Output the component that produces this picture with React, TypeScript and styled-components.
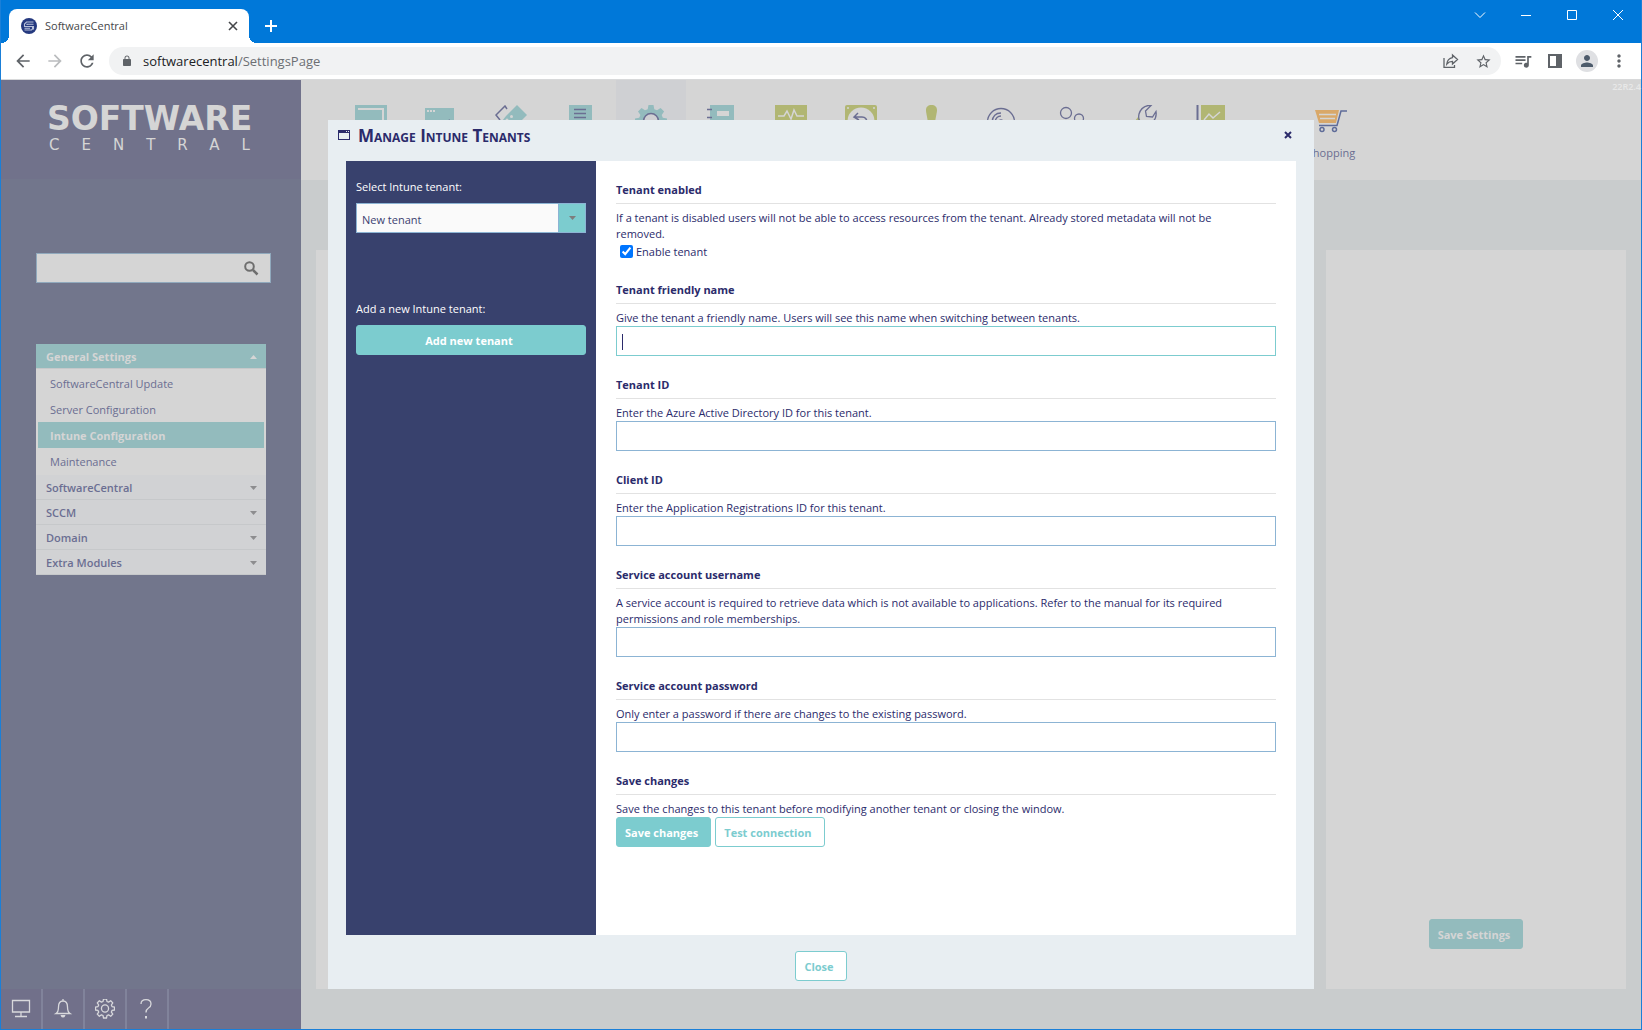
import React, { ReactNode } from "react";
import styled, { createGlobalStyle, css } from "styled-components";

const ink = "#2b2b6b";
const teal = "#7ccccf";
const fieldBlue = "#8cb4d4";
const mutedTeal = "#93bbbd";
const mutedInk = "#6b6e92";
const mutedWhite = "#d5d5d5";
const mutedLime = "#b1b673";
const uiFont = '"Open Sans", "Noto Sans", sans-serif';

const GlobalStyle = createGlobalStyle`
  *, *::before, *::after { box-sizing: border-box; }
  body { margin: 0; font-family: ${uiFont}; font-size: 11px; line-height: 16px; color: ${ink}; }
  button, input, select { font: inherit; color: inherit; }
  button { padding: 0; border: 0; background: none; cursor: pointer; }
  svg { display: block; flex: none; }
  h1, h2, p, ul { margin: 0; padding: 0; }
`;

/* ---------- browser window ---------- */

const Window = styled.div`
  display: flex;
  flex-direction: column;
  min-height: 100vh;
  border: solid #1a7fd8;
  border-width: 0 1px 1px;
`;

const TabStrip = styled.header`
  display: flex;
  align-items: flex-end;
  height: 43px;
  padding-left: 8px;
  background: #0078d9;
`;

const Tab = styled.div`
  position: relative;
  display: flex;
  align-items: center;
  gap: 8px;
  width: 240px;
  height: 34px;
  padding: 0 11px 0 12px;
  border-radius: 8px 8px 0 0;
  background: #fff;
  color: #45474a;

  &::before,
  &::after {
    content: "";
    position: absolute;
    bottom: 0;
    width: 8px;
    height: 8px;
  }
  &::before {
    left: -8px;
    background: radial-gradient(circle at 0 0, transparent 8px, #fff 8px);
  }
  &::after {
    right: -8px;
    background: radial-gradient(circle at 100% 0, transparent 8px, #fff 8px);
  }
`;

const TabTitle = styled.span`
  flex: 1;
`;

const NewTab = styled.button`
  display: grid;
  place-items: center;
  width: 28px;
  height: 34px;
  margin-left: 8px;
`;

const WindowControls = styled.div`
  display: flex;
  align-self: flex-start;
  margin-left: auto;
`;

const WindowControl = styled.button`
  display: grid;
  place-items: center;
  width: 46px;
  height: 30px;
`;

const Toolbar = styled.nav`
  display: flex;
  align-items: center;
  height: 37px;
  padding: 0 6px;
  border-bottom: 1px solid #d8d9da;
  background: #fff;
`;

const ToolButton = styled.button`
  display: grid;
  place-items: center;
  width: 32px;
  height: 28px;
`;

const Address = styled.div`
  display: flex;
  flex: 1;
  align-items: center;
  gap: 10px;
  height: 28px;
  margin: 0 6px;
  padding: 0 2px 0 12px;
  border-radius: 14px;
  background: #f1f2f3;
`;

const Url = styled.span`
  flex: 1;
  font-size: 13px;
  color: #6c6f73;
`;

const Host = styled.span`
  color: #202124;
`;

const AddressActions = styled.div`
  display: flex;
`;

const Avatar = styled.span`
  display: grid;
  place-items: center;
  width: 22px;
  height: 22px;
  border-radius: 50%;
  background: #dfe0e3;
`;

/* ---------- page behind the dialog ---------- */

const Page = styled.div`
  display: grid;
  flex: 1;
`;

const Backdrop = styled.div`
  display: flex;
  grid-area: 1 / 1;
  background: #c9cccd;
`;

const Sidebar = styled.aside`
  display: flex;
  flex-direction: column;
  flex: none;
  width: 300px;
  background: #72768c;
`;

const Brand = styled.div`
  display: flex;
  flex-direction: column;
  height: 99px;
  padding: 23px 0 0 46px;
  background: #71728b;
  color: ${mutedWhite};
  font-family: "DejaVu Sans", sans-serif;
  white-space: nowrap;
`;

const BrandName = styled.span`
  font-size: 33px;
  font-weight: 700;
  line-height: 32px;
`;

const BrandSub = styled.span`
  padding-left: 2px;
  font-size: 15px;
  line-height: 20px;
  letter-spacing: 22px;
`;

const SearchBox = styled.label`
  display: flex;
  align-items: center;
  width: 235px;
  height: 30px;
  margin: 74px 0 61px 35px;
  padding: 0 10px 0 8px;
  border: 1px solid #90a9bd;
  background: ${mutedWhite};
`;

const SearchInput = styled.input`
  flex: 1;
  min-width: 0;
  border: 0;
  outline: 0;
  background: transparent;
`;

const Menu = styled.nav`
  width: 230px;
  margin-left: 35px;
  background: ${mutedWhite};
`;

const MenuGroup = styled.button<{ $open?: boolean }>`
  display: flex;
  align-items: center;
  justify-content: space-between;
  width: 100%;
  height: 25px;
  padding: 1px 9px 0 10px;
  border-bottom: 1px solid #c6c8ca;
  background: ${(p) => (p.$open ? mutedTeal : "#d1d2d4")};
  color: ${(p) => (p.$open ? mutedWhite : mutedInk)};
  font-weight: ${(p) => (p.$open ? 700 : 600)};
`;

const MenuItems = styled.ul`
  padding: 1px 2px;
  list-style: none;
`;

const MenuLink = styled.a<{ $current?: boolean }>`
  display: block;
  height: 26px;
  padding-left: 12px;
  line-height: 27px;
  color: ${mutedInk};
  text-decoration: none;
  ${(p) =>
    p.$current &&
    css`
      background: ${mutedTeal};
      color: ${mutedWhite};
      font-weight: 700;
    `}
`;

const Dock = styled.div`
  display: flex;
  height: 40px;
  margin-top: auto;
  background: #71708a;
`;

const DockButton = styled.button`
  display: grid;
  place-items: center;
  width: 42px;
  border-right: 2px solid #81839b;
`;

const Main = styled.main`
  display: flex;
  flex: 1;
  flex-direction: column;
  min-width: 0;
`;

const Ribbon = styled.div`
  display: flex;
  height: 100px;
  padding-left: 35px;
  background: ${mutedWhite};
`;

const RibbonButton = styled.button<{ $selected?: boolean; $apart?: boolean }>`
  display: flex;
  flex-direction: column;
  flex: none;
  align-items: center;
  gap: 8px;
  width: 70px;
  margin-left: ${(p) => (p.$apart ? "50px" : "0")};
  padding-top: 25px;
  background: ${(p) => (p.$selected ? "#cfd0d3" : "transparent")};
  color: ${mutedInk};
`;

const Version = styled.span`
  margin-left: auto;
  color: #e8e8e8;
  font-size: 9px;
  font-weight: 600;
  line-height: 14px;
  white-space: nowrap;
`;

const Panels = styled.div`
  display: flex;
  flex: 1;
  gap: 15px;
  padding: 70px 15px 40px;
`;

const Panel = styled.section<{ $side?: boolean }>`
  display: flex;
  flex: ${(p) => (p.$side ? "none" : "1")};
  align-items: flex-end;
  justify-content: center;
  width: ${(p) => (p.$side ? "300px" : "auto")};
  padding-bottom: 40px;
  background: ${mutedWhite};
`;

/* ---------- shared controls ---------- */

const Button = styled.button<{ $kind?: "solid" | "outline" | "muted"; $wide?: boolean }>`
  height: 30px;
  width: ${(p) => (p.$wide ? "100%" : "auto")};
  padding: 1px 12px 0 8px;
  border: 1px solid ${teal};
  border-radius: 3px;
  background: ${teal};
  color: #fff;
  font-weight: 700;
  ${(p) =>
    p.$kind === "outline" &&
    css`
      background: #fff;
      color: ${teal};
    `}
  ${(p) =>
    p.$kind === "muted" &&
    css`
      border-color: ${mutedTeal};
      background: ${mutedTeal};
      color: ${mutedWhite};
    `}
`;

/* ---------- dialog ---------- */

const Dialog = styled.section`
  z-index: 1;
  display: flex;
  flex-direction: column;
  grid-area: 1 / 1;
  justify-self: center;
  width: calc(60% + 2px);
  margin: 40px 0;
  padding: 0 18px;
  background: #e8eef2;
`;

const DialogHeader = styled.header`
  display: flex;
  height: 41px;
  margin: 0 -8px;
  padding-top: 7px;
`;

const DialogIcon = styled.span`
  padding-top: 3px;
`;

const DialogTitle = styled.h1`
  flex: 1;
  padding-left: 8px;
  font-size: 17px;
  font-weight: 700;
  font-variant: small-caps;
  line-height: 18px;
`;

const DialogClose = styled.button`
  align-self: flex-start;
  padding: 4px 12px 4px 4px;
`;

const DialogBody = styled.div`
  display: flex;
  flex: 1;
  background: #fff;
`;

const DialogFooter = styled.footer`
  display: flex;
  justify-content: center;
  height: 54px;
  padding-top: 16px;
`;

const TenantPane = styled.div`
  flex: none;
  width: 250px;
  padding: 18px 10px;
  background: #38416d;
  color: #fff;
`;

const PaneLabel = styled.label`
  display: block;
  padding-bottom: 8px;
`;

const PaneText = styled.p`
  padding: 68px 0 8px;
`;

const SelectFrame = styled.div`
  position: relative;
`;

const TenantSelect = styled.select`
  display: block;
  width: 100%;
  height: 30px;
  padding: 3px 34px 0 5px;
  border: 1px solid ${fieldBlue};
  border-radius: 0;
  appearance: none;
  background: #fafafa;
  color: #3c3f70;
`;

const SelectArrow = styled.span`
  position: absolute;
  top: 1px;
  right: 1px;
  bottom: 1px;
  display: grid;
  place-items: center;
  width: 27px;
  border-left: 1px solid ${fieldBlue};
  background: ${teal};
  pointer-events: none;
`;

const SettingsForm = styled.form`
  flex: 1;
  padding: 0 20px 20px;
`;

const Field = styled.div`
  padding-top: 20px;
`;

const FieldTitle = styled.h2`
  height: 23px;
  margin-bottom: 6px;
  border-bottom: 1px solid #e2e2e2;
  font-size: 11px;
  font-weight: 700;
  line-height: 18px;
`;

const Help = styled.p`
  padding-right: 20px;
`;

const InputFrame = styled.div`
  position: relative;
`;

const TextInput = styled.input<{ $active?: boolean }>`
  display: block;
  width: 100%;
  height: 30px;
  padding: 0 6px;
  border: 1px solid ${(p) => (p.$active ? teal : fieldBlue)};
  outline: 0;
  background: #fff;
`;

const Caret = styled.span`
  position: absolute;
  top: 8px;
  left: 6px;
  width: 1px;
  height: 16px;
  background: ${ink};
`;

const CheckLabel = styled.label`
  display: flex;
  align-items: center;
  height: 19px;
`;

const Check = styled.input`
  width: 13px;
  height: 13px;
  margin: 3px 3px 3px 4px;
`;

const ButtonRow = styled.div`
  display: flex;
  gap: 4px;
`;

/* ---------- drawings ---------- */

type GlyphProps = { d: string; size?: number; fill?: string };

const Glyph = ({ d, size = 20, fill = "#5f6368" }: GlyphProps) => (
  <svg width={size} height={size} viewBox="0 0 24 24" fill={fill} aria-hidden="true">
    <path d={d} />
  </svg>
);

const Line = ({ d, size = 12, color = "#fff", width = 1 }: { d: string; size?: number; color?: string; width?: number }) => (
  <svg width={size} height={size} viewBox={`0 0 ${size} ${size}`} fill="none" stroke={color} strokeWidth={width} aria-hidden="true">
    <path d={d} />
  </svg>
);

const Triangle = ({ up, color }: { up?: boolean; color: string }) => (
  <svg width="7" height="4" viewBox="0 0 7 4" fill={color} aria-hidden="true">
    <path d={up ? "M0 4 3.500 0 7 4z" : "M0 0h7L3.500 4z"} />
  </svg>
);

const glyphs = {
  back: "M20 11H7.830l5.590-5.590L12 4l-8 8 8 8 1.410-1.410L7.830 13H20v-2z",
  forward: "M12 4l-1.410 1.410L16.170 11H4v2h12.170l-5.580 5.590L12 20l8-8z",
  reload:
    "M17.650 6.350C16.200 4.900 14.210 4 12 4c-4.420 0-7.990 3.580-7.990 8s3.570 8 7.990 8c3.730 0 6.840-2.550 7.730-6h-2.080c-.82 2.330-3.040 4-5.650 4-3.310 0-6-2.690-6-6s2.690-6 6-6c1.660 0 3.140.69 4.220 1.780L13 11h7V4l-2.350 2.350z",
  lock: "M18 8h-1V6c0-2.760-2.240-5-5-5S7 3.240 7 6v2H6c-1.100 0-2 .9-2 2v10c0 1.100.9 2 2 2h12c1.100 0 2-.9 2-2V10c0-1.100-.9-2-2-2zM8.900 8V6c0-1.710 1.390-3.100 3.100-3.100s3.100 1.390 3.100 3.100v2z",
  star: "M22 9.240l-7.190-.62L12 2 9.190 8.630 2 9.240l5.460 4.730L5.820 21 12 17.270 18.180 21l-1.630-7.030L22 9.240zM12 15.400l-3.760 2.270 1-4.280-3.320-2.880 4.380-.38L12 6.100l1.710 4.040 4.380.38-3.320 2.880 1 4.280L12 15.400z",
  queue:
    "M15 6H3v2h12V6zm0 4H3v2h12v-2zM3 16h8v-2H3v2zM17 6v8.180c-.31-.11-.65-.18-1-.18-1.660 0-3 1.340-3 3s1.340 3 3 3 3-1.340 3-3V8h3V6h-5z",
  person:
    "M12 12c2.210 0 4-1.790 4-4s-1.790-4-4-4-4 1.790-4 4 1.790 4 4 4zm0 2c-2.670 0-8 1.340-8 4v2h16v-2c0-2.660-5.330-4-8-4z",
  dots: "M12 8c1.100 0 2-.9 2-2s-.9-2-2-2-2 .9-2 2 .9 2 2 2zm0 2c-1.100 0-2 .9-2 2s.9 2 2 2 2-.9 2-2-.9-2-2-2zm0 6c-1.100 0-2 .9-2 2s.9 2 2 2 2-.9 2-2-.9-2-2-2z",
};

const SearchArt = () => (
  <svg width="18" height="18" viewBox="0 0 18 18" fill="none" stroke="#6e6e6e" strokeWidth="2" aria-hidden="true">
    <circle cx="7.500" cy="7.500" r="4.300" />
    <path d="m11 11 4.500 4.500" strokeWidth="2.500" />
  </svg>
);

const Favicon = () => (
  <svg width="16" height="16" viewBox="0 0 16 16" aria-hidden="true">
    <circle cx="8" cy="8" r="8" fill="#25397f" />
    <path d="M12.500 4H5.500L3.500 6v2.500h8v2.500l-1 1H3.500M12.500 6.200H6v.8M9 10.300H3.500M12.500 8v3.500" fill="none" stroke="#b9c1da" strokeWidth="1.100" />
  </svg>
);

const gearPath =
  "M13.500 0h5l.8 4.200 2.700 1.100L25.600 3l3.500 3.500-2.400 3.600 1.100 2.600 4.200.8v5l-4.200.8-1.100 2.700 2.400 3.500-3.500 3.500-3.600-2.400-2.700 1.200-.8 4.200h-5l-.8-4.200-2.700-1.200-3.500 2.400L3 25.500 5.400 22l-1.200-2.700L0 18.500v-5l4.200-.8 1.200-2.600L3 6.500 6.500 3 10 5.300l2.700-1.100z";

const ribbonDrawings: { label: string; art: ReactNode }[] = [
  {
    label: "Windows",
    art: (
      <>
        <path d="M0 0h32v32H0z" fill={mutedTeal} />
        <path d="M3 4h25v28" fill="none" stroke={mutedWhite} strokeWidth="2" />
      </>
    ),
  },
  {
    label: "Console",
    art: (
      <>
        <path d="M0 3h29v26H0z" fill={mutedTeal} />
        <path d="M2 6h2m1 0h2m1 0h2" stroke={mutedWhite} strokeWidth="2" />
        <path d="m21 18 4-3" stroke={mutedInk} strokeWidth="2" />
      </>
    ),
  },
  {
    label: "Packages",
    art: (
      <>
        <path d="M11 11 22 0l10 10-18 18-10-8z" fill={mutedTeal} />
        <circle cx="16.500" cy="11.500" r="1.500" fill={mutedWhite} />
        <circle cx="12" cy="15" r="1.500" fill={mutedWhite} />
        <path d="m12 4-2-3-9 9 4 5" fill="none" stroke={mutedInk} strokeWidth="1.500" />
      </>
    ),
  },
  {
    label: "Documents",
    art: (
      <>
        <path d="M4 0h23v32H4z" fill={mutedTeal} />
        <path d="M9 4.500h12M9 8.500h12M9 12.500h12" stroke={mutedInk} strokeWidth="1.500" />
      </>
    ),
  },
  {
    label: "Settings",
    art: (
      <>
        <path d={gearPath} fill={mutedTeal} />
        <circle cx="16" cy="16" r="7.500" fill="#cfd0d3" stroke={mutedInk} strokeWidth="1.500" />
      </>
    ),
  },
  {
    label: "Inventory",
    art: (
      <>
        <path d="M5 0h24v32H5z" fill={mutedTeal} />
        <path d="M12 6h12v5H12z" fill={mutedWhite} />
        <path d="M2 4.500h5M2 12.500h5" stroke={mutedInk} strokeWidth="1.500" />
      </>
    ),
  },
  {
    label: "Monitoring",
    art: (
      <>
        <path d="M0 0h32v32H0z" fill={mutedLime} />
        <path d="M3 11h6l3-5 4 8 3-9 3 6h7" fill="none" stroke={mutedWhite} strokeWidth="1.500" />
      </>
    ),
  },
  {
    label: "Restore",
    art: (
      <>
        <rect width="32" height="32" rx="2" fill={mutedLime} />
        <circle cx="16" cy="16" r="13.500" fill={mutedWhite} />
        <circle cx="3" cy="3" r="1" fill={mutedWhite} />
        <circle cx="29" cy="3" r="1" fill={mutedWhite} />
        <path d="m13 8-4 4 5 3M9 12h8q5 0 5 6" fill="none" stroke={mutedInk} strokeWidth="1.500" />
      </>
    ),
  },
  {
    label: "Alerts",
    art: <path d="M16.500 0C20 0 22 2 22 5c0 3-1 5-2 13h-7C12 10 11 8 11 5c0-3 2-5 5.500-5z" fill={mutedLime} />,
  },
  {
    label: "Media",
    art: (
      <g fill="none" stroke={mutedInk} strokeWidth="1.300">
        <circle cx="16" cy="17" r="13.500" />
        <path d="M7 17q1-9 9-9M10 17q1-6 6-6" />
        <circle cx="16" cy="17" r="2" />
      </g>
    ),
  },
  {
    label: "Users",
    art: (
      <g fill="none" stroke={mutedInk} strokeWidth="1.300">
        <circle cx="11" cy="8" r="5.500" />
        <circle cx="24" cy="13.500" r="4.500" />
      </g>
    ),
  },
  {
    label: "Tools",
    art: (
      <>
        <path d="m10 16 3-4 3 4-3 4z" fill={mutedLime} />
        <path
          d="M15 17q-2-3-1-8 2-7 9-8.500h3L20.500 6l1 5.500 6 .5L31 6.500q1 6-3 10.500"
          fill="none"
          stroke={mutedInk}
          strokeWidth="1.300"
        />
      </>
    ),
  },
  {
    label: "Reports",
    art: (
      <>
        <path d="M6 0h24v28H6z" fill={mutedLime} />
        <path d="M2.500 0v32" stroke={mutedInk} strokeWidth="2" />
        <path d="m9 15 5-6 4 4 7-6" fill="none" stroke={mutedWhite} strokeWidth="1.500" />
      </>
    ),
  },
];

const CartArt = () => (
  <>
    <path d="M0 5h24l-3 13H4z" fill="#d9a869" />
    <path d="M4 9.500h17M5 13.500h15" stroke={mutedWhite} strokeWidth="1.500" />
    <path d="M32 6h-6l-4 14.500H4" fill="none" stroke="#5f6c99" strokeWidth="1.500" />
    <circle cx="7" cy="24.500" r="2" fill="none" stroke="#5f6c99" strokeWidth="1.500" />
    <circle cx="19.500" cy="24.500" r="2" fill="none" stroke="#5f6c99" strokeWidth="1.500" />
  </>
);

const DockArt = ({ children }: { children: ReactNode }) => (
  <svg width="20" height="20" viewBox="0 0 20 20" fill="none" stroke="#d8d8dc" strokeWidth="1.300" aria-hidden="true">
    {children}
  </svg>
);

/* ---------- composition ---------- */

const BrowserChrome = () => (
  <>
    <TabStrip>
      <Tab>
        <Favicon />
        <TabTitle>SoftwareCentral</TabTitle>
        <button type="button" aria-label="Close tab">
          <Line d="M1 1l8 8M9 1l-8 8" size={10} color="#45474a" width={1.6} />
        </button>
      </Tab>
      <NewTab type="button" aria-label="New tab">
        <Line d="M6 0v12M0 6h12" width={2} />
      </NewTab>
      <WindowControls>
        <WindowControl type="button" aria-label="Search tabs">
          <Line d="M1 3.500l5 5 5-5" />
        </WindowControl>
        <WindowControl type="button" aria-label="Minimize">
          <Line d="M1 6.500h10" />
        </WindowControl>
        <WindowControl type="button" aria-label="Maximize">
          <Line d="M1.500 1.500h9v9h-9z" />
        </WindowControl>
        <WindowControl type="button" aria-label="Close window">
          <Line d="M1 1l10 10M11 1L1 11" />
        </WindowControl>
      </WindowControls>
    </TabStrip>
    <Toolbar>
      <ToolButton type="button" aria-label="Back"><Glyph d={glyphs.back} /></ToolButton>
      <ToolButton type="button" aria-label="Forward"><Glyph d={glyphs.forward} fill="#babcbe" /></ToolButton>
      <ToolButton type="button" aria-label="Reload"><Glyph d={glyphs.reload} /></ToolButton>
      <Address>
        <Glyph d={glyphs.lock} size={12} />
        <Url><Host>softwarecentral</Host>/SettingsPage</Url>
        <AddressActions>
          <ToolButton type="button" aria-label="Share">
            <svg width="16" height="16" viewBox="0 0 16 16" fill="none" stroke="#5f6368" strokeWidth="1.300" aria-hidden="true">
              <path d="M1 5v9.300h10.500V12M9.500 2l5 4.500-5 4.500V8.300Q6 8.300 3.800 11 4.500 5.500 9.500 4.700z" />
            </svg>
          </ToolButton>
          <ToolButton type="button" aria-label="Bookmark"><Glyph d={glyphs.star} size={17} /></ToolButton>
        </AddressActions>
      </Address>
      <ToolButton type="button" aria-label="Media controls"><Glyph d={glyphs.queue} /></ToolButton>
      <ToolButton type="button" aria-label="Side panel">
        <svg width="14" height="14" viewBox="0 0 14 14" aria-hidden="true">
          <path d="M0 0h14v14H0z M2 2v10h6V2z" fill="#5f6368" fillRule="evenodd" />
        </svg>
      </ToolButton>
      <ToolButton type="button" aria-label="Profile">
        <Avatar><Glyph d={glyphs.person} size={18} fill="#4d5b6b" /></Avatar>
      </ToolButton>
      <ToolButton type="button" aria-label="Menu"><Glyph d={glyphs.dots} /></ToolButton>
    </Toolbar>
  </>
);

const generalItems = ["SoftwareCentral Update", "Server Configuration", "Intune Configuration", "Maintenance"];
const closedGroups = ["SoftwareCentral", "SCCM", "Domain", "Extra Modules"];

const SidebarContent = () => (
  <Sidebar>
    <Brand>
      <BrandName>SOFTWARE</BrandName>
      <BrandSub>CENTRAL</BrandSub>
    </Brand>
    <SearchBox>
      <SearchInput type="text" aria-label="Search settings" />
      <SearchArt />
    </SearchBox>
    <Menu>
      <MenuGroup type="button" $open>
        General Settings
        <Triangle up color={mutedWhite} />
      </MenuGroup>
      <MenuItems>
        {generalItems.map((item) => (
          <li key={item}>
            <MenuLink href="#" $current={item === "Intune Configuration"}>{item}</MenuLink>
          </li>
        ))}
      </MenuItems>
      {closedGroups.map((group) => (
        <MenuGroup type="button" key={group}>
          {group}
          <Triangle color="#8d8d8f" />
        </MenuGroup>
      ))}
    </Menu>
    <Dock>
      <DockButton type="button" aria-label="Desktop">
        <DockArt><path d="M1.500 1.500h17V13h-17zM10 13v4.500M4 17.500h12" /></DockArt>
      </DockButton>
      <DockButton type="button" aria-label="Notifications">
        <DockArt>
          <path d="M10 0v2M3 14.500q2.500-1.500 2.500-6.500Q5.500 2 10 2t4.500 6q0 5 2.500 6.500z" />
          <path d="M7.500 16h5q-.5 2.500-2.500 2.500T7.500 16z" fill="#d8d8dc" stroke="none" />
        </DockArt>
      </DockButton>
      <DockButton type="button" aria-label="Preferences">
        <DockArt>
          <g transform="translate(.5 0) scale(.594)" strokeWidth="2.200">
            <path d={gearPath} strokeLinejoin="round" />
            <circle cx="16" cy="16" r="6" />
          </g>
        </DockArt>
      </DockButton>
      <DockButton type="button" aria-label="Help">
        <DockArt>
          <path d="M4 5Q4 .7 9 .7T14 5q0 2.500-2.500 4T9 13.500" />
          <path d="M9 17v2.500" strokeWidth="2" />
        </DockArt>
      </DockButton>
    </Dock>
  </Sidebar>
);

const RibbonBar = () => (
  <Ribbon>
    {ribbonDrawings.map(({ label, art }) => (
      <RibbonButton type="button" key={label} aria-label={label} $selected={label === "Settings"}>
        <svg width="32" height="32" viewBox="0 0 32 32" aria-hidden="true">{art}</svg>
      </RibbonButton>
    ))}
    <RibbonButton type="button" $apart>
      <svg width="32" height="32" viewBox="0 0 32 32" aria-hidden="true"><CartArt /></svg>
      Shopping
    </RibbonButton>
    <Version>22R2.4</Version>
  </Ribbon>
);

type TextFieldProps = { id: string; title: string; help: string; type?: string; active?: boolean };

const TextField = ({ id, title, help, type = "text", active }: TextFieldProps) => (
  <Field>
    <FieldTitle><label htmlFor={id}>{title}</label></FieldTitle>
    <Help>{help}</Help>
    <InputFrame>
      <TextInput id={id} type={type} $active={active} />
      {active && <Caret />}
    </InputFrame>
  </Field>
);

const TenantDialog = () => (
  <Dialog role="dialog" aria-labelledby="dialog-title">
    <DialogHeader>
      <DialogIcon>
        <svg width="12" height="10" viewBox="0 0 12 10" aria-hidden="true">
          <path d="M0 0h12v10H0zM1 3v6h10V3zM8 1v1h1V1zM10 1v1h1V1z" fill={ink} fillRule="evenodd" />
        </svg>
      </DialogIcon>
      <DialogTitle id="dialog-title">Manage Intune Tenants</DialogTitle>
      <DialogClose type="button" aria-label="Close dialog">
        <Line d="M1 1l6 6M7 1L1 7" size={8} color={ink} width={2} />
      </DialogClose>
    </DialogHeader>
    <DialogBody>
      <TenantPane>
        <PaneLabel htmlFor="tenant">Select Intune tenant:</PaneLabel>
        <SelectFrame>
          <TenantSelect id="tenant">
            <option>New tenant</option>
          </TenantSelect>
          <SelectArrow><Triangle color="#7d7d7d" /></SelectArrow>
        </SelectFrame>
        <PaneText>Add a new Intune tenant:</PaneText>
        <Button type="button" $wide>Add new tenant</Button>
      </TenantPane>
      <SettingsForm>
        <Field>
          <FieldTitle>Tenant enabled</FieldTitle>
          <Help>
            If a tenant is disabled users will not be able to access resources from the tenant. Already stored metadata
            will not be removed.
          </Help>
          <CheckLabel>
            <Check type="checkbox" defaultChecked />
            Enable tenant
          </CheckLabel>
        </Field>
        <TextField
          id="friendly"
          title="Tenant friendly name"
          help="Give the tenant a friendly name. Users will see this name when switching between tenants."
          active
        />
        <TextField id="tenant-id" title="Tenant ID" help="Enter the Azure Active Directory ID for this tenant." />
        <TextField id="client-id" title="Client ID" help="Enter the Application Registrations ID for this tenant." />
        <TextField
          id="username"
          title="Service account username"
          help="A service account is required to retrieve data which is not available to applications. Refer to the manual for its required permissions and role memberships."
        />
        <TextField
          id="password"
          type="password"
          title="Service account password"
          help="Only enter a password if there are changes to the existing password."
        />
        <Field>
          <FieldTitle>Save changes</FieldTitle>
          <Help>Save the changes to this tenant before modifying another tenant or closing the window.</Help>
          <ButtonRow>
            <Button type="button">Save changes</Button>
            <Button type="button" $kind="outline">Test connection</Button>
          </ButtonRow>
        </Field>
      </SettingsForm>
    </DialogBody>
    <DialogFooter>
      <Button type="button" $kind="outline">Close</Button>
    </DialogFooter>
  </Dialog>
);

export default function App() {
  return (
    <>
      <GlobalStyle />
      <Window>
        <BrowserChrome />
        <Page>
          <Backdrop>
            <SidebarContent />
            <Main>
              <RibbonBar />
              <Panels>
                <Panel />
                <Panel $side>
                  <Button type="button" $kind="muted">Save Settings</Button>
                </Panel>
              </Panels>
            </Main>
          </Backdrop>
          <TenantDialog />
        </Page>
      </Window>
    </>
  );
}
